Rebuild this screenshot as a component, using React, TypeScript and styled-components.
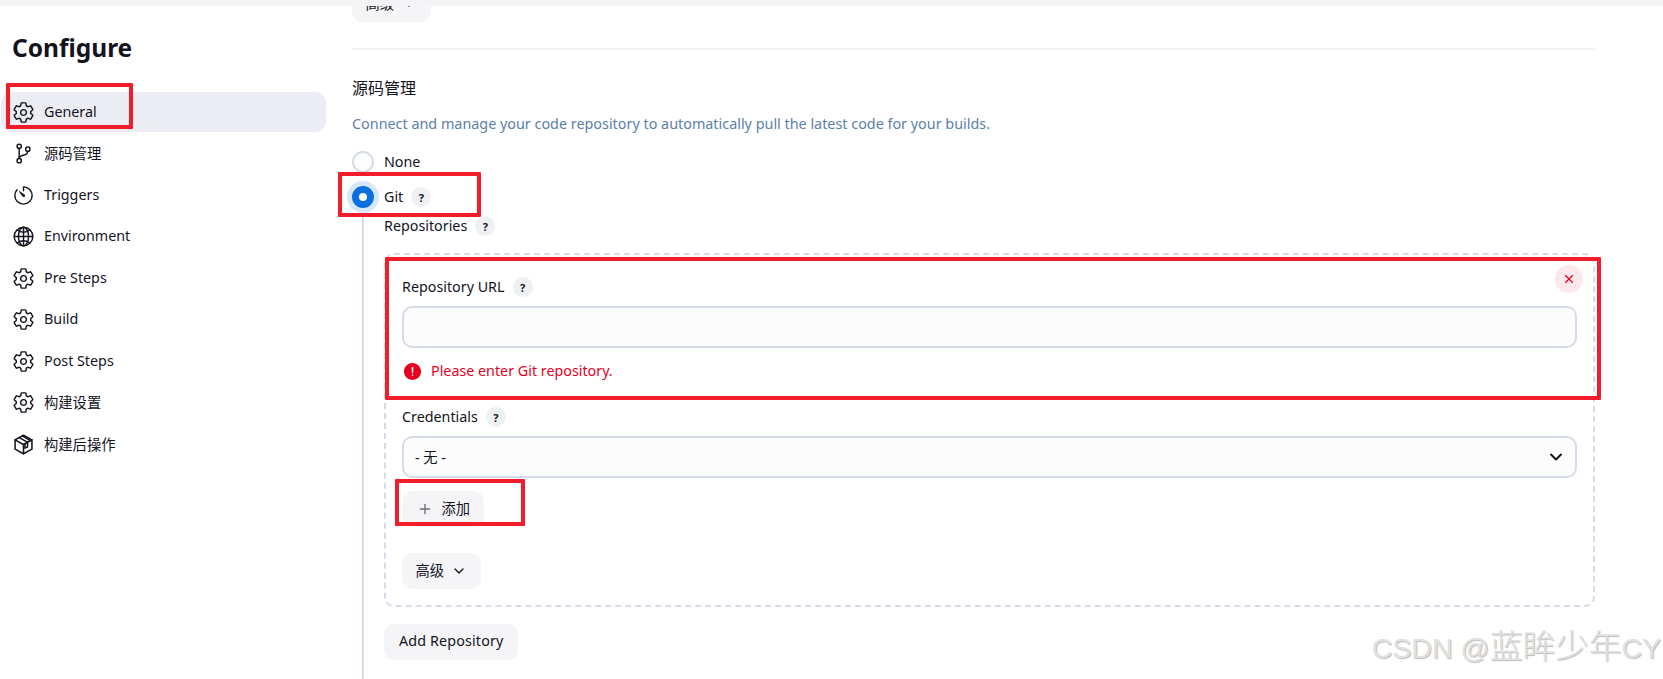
import React from "react";
import styled, { createGlobalStyle } from "styled-components";
import {
  IoSettingsOutline,
  IoGitBranchOutline,
  IoTimerOutline,
  IoGlobeOutline,
  IoAlertCircle,
} from "react-icons/io5";
import { ChevronDown, Plus, X } from "lucide-react";

const FONT = `"Noto Sans", "Noto Sans CJK SC", sans-serif`;
const INK = "#14141f";
const LINE = "#d5dbe8";

const Global = createGlobalStyle`
  html, body { margin: 0; padding: 0; background: #fff; }
  body { font-family: ${FONT}; color: ${INK}; font-size: 14.3px; }
  * { box-sizing: border-box; }
`;

const Page = styled.div`
  position: relative;
  width: 1663px;
  height: 679px;
  overflow: hidden;
  display: flex;
  flex-direction: column;
`;
const TopStrip = styled.div`
  height: 6px;
  flex: none;
  background: #f4f4f6;
`;
const Body = styled.div`
  flex: 1;
  min-height: 0;
  overflow: hidden;
  display: flex;
`;
const Sidebar = styled.aside`
  width: 352px;
  flex: none;
  padding: 26px 0 0 1px;
`;
const Title = styled.h1`
  margin: 0 0 28px 11px;
  font-size: 24.5px;
  line-height: 32px;
  font-weight: 700;
`;
const Nav = styled.nav`
  width: 325px;
  display: flex;
  flex-direction: column;
  gap: 1.5px;
`;
const NavItem = styled.div<{ $active?: boolean }>`
  height: 40px;
  display: flex;
  align-items: center;
  gap: 9px;
  padding: 0 0 0 11px;
  border-radius: 11px;
  background: ${(p) => (p.$active ? "#ecedf2" : "transparent")};
  svg {
    width: 23px;
    height: 23px;
    flex: none;
  }
`;
const NavText = styled.span`
  position: relative;
  top: -1px;
`;
const Main = styled.main`
  width: 1243px;
  flex: none;
`;
const SoftButton = styled.div<{ $top: number }>`
  display: inline-flex;
  align-items: center;
  height: 36px;
  margin-top: ${(p) => p.$top}px;
  padding: 0 13.5px 3px;
  gap: 7px;
  border-radius: 10px;
  background: #f5f5f8;
  svg {
    width: 16px;
    height: 16px;
    position: relative;
    top: 1.5px;
  }
`;
const WideButton = styled(SoftButton)`
  padding: 0 15px 3px;
  letter-spacing: 0.15px;
`;
const AddIcon = styled.span`
  display: inline-flex;
  color: #6d6d78;
  margin: 0 2px 0 1px;
`;
const Divider = styled.div`
  height: 2px;
  margin-top: 26px;
  background: #f3f3f7;
`;
const Heading = styled.h2`
  margin: 27px 0 0;
  font-size: 16px;
  line-height: 22px;
  font-weight: 400;
`;
const Description = styled.p`
  margin: 15px 0 0;
  font-size: 14.36px;
  line-height: 20px;
  color: #5b80a8;
`;
const RadioRow = styled.div<{ $top: number }>`
  display: flex;
  align-items: center;
  height: 24px;
  margin-top: ${(p) => p.$top}px;
  line-height: 20px;
`;
const Radio = styled.span<{ $checked?: boolean }>`
  width: 22px;
  height: 22px;
  flex: none;
  margin-right: 10px;
  border-radius: 50%;
  position: relative;
  background: ${(p) => (p.$checked ? "#fff" : "#fdfdfe")};
  border: ${(p) => (p.$checked ? "7.5px solid #0b6fe0" : `2px solid ${LINE}`)};
  box-shadow: ${(p) => (p.$checked ? "0 0 0 5px #d6e7f9" : "none")};
`;
const Help = styled.span<{ $gap: number }>`
  width: 20px;
  height: 20px;
  flex: none;
  margin-left: ${(p) => p.$gap}px;
  border-radius: 50%;
  background: #eef0f4;
  display: inline-flex;
  align-items: center;
  justify-content: center;
  font-size: 11px;
  font-weight: 700;
  line-height: 1;
`;
const Nested = styled.div`
  margin-left: 10px;
  border-left: 2px solid ${LINE};
  padding: 7px 0 40px 20px;
`;
const Label = styled.div<{ $top?: number }>`
  display: flex;
  align-items: center;
  height: 20px;
  line-height: 20px;
  margin-top: ${(p) => p.$top ?? 0}px;
`;
const RepoBox = styled.div`
  position: relative;
  margin-top: 17px;
  width: 1211px;
  padding: 22px 16px 16px;
  border: 2px dashed ${LINE};
  border-radius: 10px;
`;
const CloseButton = styled.span`
  position: absolute;
  top: 10px;
  right: 10px;
  width: 28px;
  height: 28px;
  border-radius: 50%;
  background: #fbe9ec;
  color: #e6001f;
  display: flex;
  align-items: center;
  justify-content: center;
  svg {
    width: 14px;
    height: 14px;
  }
`;
const TextInput = styled.input`
  display: block;
  width: 100%;
  height: 42px;
  margin-top: 9px;
  border: 2px solid ${LINE};
  border-radius: 10px;
  background: #fcfcfd;
  outline: none;
`;
const ErrorRow = styled.div`
  display: flex;
  align-items: center;
  gap: 8px;
  height: 20px;
  margin-top: 13px;
  color: #e6001f;
  line-height: 20px;
  svg {
    width: 21px;
    height: 21px;
    flex: none;
  }
`;
const SelectBox = styled.div`
  display: flex;
  align-items: center;
  justify-content: space-between;
  height: 42px;
  margin-top: 9px;
  padding: 0 9px 2px 11px;
  border: 2px solid ${LINE};
  border-radius: 10px;
  background: #fcfcfd;
  svg {
    width: 20px;
    height: 20px;
    position: relative;
    top: 1px;
  }
`;
const Stack = styled.div`
  display: flex;
  flex-direction: column;
  align-items: flex-start;
`;
const Annotation = styled.div<{ $x: number; $y: number; $w: number; $h: number }>`
  position: absolute;
  left: ${(p) => p.$x}px;
  top: ${(p) => p.$y}px;
  width: ${(p) => p.$w}px;
  height: ${(p) => p.$h}px;
  border: 4px solid #f21c2b;
  border-radius: 1px;
  pointer-events: none;
`;
const Watermark = styled.div`
  position: absolute;
  right: 2px;
  bottom: 13px;
  font-family: "Liberation Sans", "Noto Sans CJK SC", sans-serif;
  font-size: 28.5px;
  line-height: 36px;
  color: #e0e0e0;
  text-shadow: 1px 1px 1px rgba(120, 120, 120, 0.5);
  white-space: nowrap;
  display: flex;
  align-items: baseline;
`;
const WatermarkAt = styled.span`
  margin: 0 0 0 8px;
`;
const WatermarkCjk = styled.span`
  font-size: 33px;
  font-weight: 300;
`;

const PackageIcon = () => (
  <svg viewBox="0 0 24 24" fill="none" stroke="currentColor" strokeWidth={1.6} strokeLinejoin="round" strokeLinecap="round">
    <path d="M12 2.4 20.8 7.1V16.9L12 21.6 3.2 16.9V7.1Z" />
    <path d="M3.2 7.1 12 12l8.8-4.9M12 12v9.6" />
    <path d="M7.4 4.8 16.2 9.6v5M10.8 3 19 7.8M13.5 11v4.8l2.7-1.2" />
  </svg>
);

const navItems = [
  { label: "General", icon: <IoSettingsOutline />, active: true },
  { label: "源码管理", icon: <IoGitBranchOutline /> },
  { label: "Triggers", icon: <IoTimerOutline /> },
  { label: "Environment", icon: <IoGlobeOutline /> },
  { label: "Pre Steps", icon: <IoSettingsOutline /> },
  { label: "Build", icon: <IoSettingsOutline /> },
  { label: "Post Steps", icon: <IoSettingsOutline /> },
  { label: "构建设置", icon: <IoSettingsOutline /> },
  { label: "构建后操作", icon: <PackageIcon /> },
];

export default function App() {
  return (
    <Page>
      <Global />
      <TopStrip />
      <Body>
        <Sidebar>
          <Title>Configure</Title>
          <Nav>
            {navItems.map((item) => (
              <NavItem key={item.label} $active={item.active}>
                {item.icon}
                <NavText>{item.label}</NavText>
              </NavItem>
            ))}
          </Nav>
        </Sidebar>
        <Main>
          <Stack>
            <SoftButton $top={-20}>
              高级
              <ChevronDown />
            </SoftButton>
          </Stack>
          <Divider />
          <Heading>源码管理</Heading>
          <Description>
            Connect and manage your code repository to automatically pull the latest code for your builds.
          </Description>
          <RadioRow $top={16}>
            <Radio />
            None
          </RadioRow>
          <RadioRow $top={11}>
            <Radio $checked />
            Git
            <Help $gap={8}>?</Help>
          </RadioRow>
          <Nested>
            <Label>
              Repositories
              <Help $gap={8}>?</Help>
            </Label>
            <RepoBox>
              <CloseButton>
                <X strokeWidth={2} />
              </CloseButton>
              <Label>
                Repository URL
                <Help $gap={8}>?</Help>
              </Label>
              <TextInput />
              <ErrorRow>
                <IoAlertCircle />
                Please enter Git repository.
              </ErrorRow>
              <Label $top={26}>
                Credentials
                <Help $gap={8}>?</Help>
              </Label>
              <SelectBox>
                - 无 -
                <ChevronDown strokeWidth={2.4} />
              </SelectBox>
              <Stack>
                <SoftButton $top={13}>
                  <AddIcon>
                    <Plus />
                  </AddIcon>
                  添加
                </SoftButton>
                <SoftButton $top={26}>
                  高级
                  <ChevronDown />
                </SoftButton>
              </Stack>
            </RepoBox>
            <Stack>
              <WideButton $top={17}>Add Repository</WideButton>
            </Stack>
          </Nested>
        </Main>
      </Body>
      <Annotation $x={6} $y={83} $w={127} $h={46} />
      <Annotation $x={338} $y={172} $w={143} $h={45} />
      <Annotation $x={385} $y={257} $w={1216} $h={143} />
      <Annotation $x={395} $y={479} $w={130} $h={47} />
      <Watermark>
        CSDN<WatermarkAt>@</WatermarkAt>
        <WatermarkCjk>蓝眸少年</WatermarkCjk>CY
      </Watermark>
    </Page>
  );
}
